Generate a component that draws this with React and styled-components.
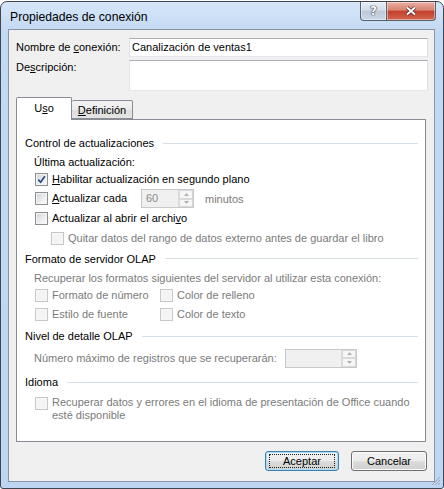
import styled, { createGlobalStyle } from "styled-components";

const GlobalStyle = createGlobalStyle`
  * { box-sizing: border-box; }
  body {
    margin: 0;
    background: #fff;
    font-family: "Liberation Sans", Arial, sans-serif;
    font-size: 11px;
    color: #000;
  }
  u { text-decoration-thickness: 1px; text-underline-offset: 1px; }
`;

const Window = styled.div`
  position: relative;
  margin-top: 1px;
  width: 444px;
  height: 488px;
  border: 1px solid #3f4650;
  border-radius: 7px 7px 3px 3px;
  background: linear-gradient(#d6e6f8, #c2d9f3 30px, #bed6f1);
  padding: 0 8px 6px 7px;
  display: flex;
  flex-direction: column;
`;

const TitleBar = styled.div`
  height: 27px;
  display: flex;
  align-items: center;
  padding-left: 2px;
`;

const Title = styled.div`
  font-size: 12.2px;
  color: #000;
  margin-top: 2px;
`;

const Caption = styled.div`
  display: flex;
  align-self: flex-start;
  margin-left: auto;
  margin-right: -1px;
`;

const CapBtn = styled.div`
  width: ${(p) => p.$w}px;
  height: 19px;
  border: 1px solid #57606d;
  border-top: none;
  display: flex;
  align-items: center;
  justify-content: center;
  border-radius: ${(p) => (p.$close ? "0 0 4px 0" : "0 0 0 4px")};
  box-shadow: inset 0 0 0 1px rgba(255, 255, 255, 0.45);
  background: ${(p) =>
    p.$close
      ? "linear-gradient(#eab0a4, #d9826f 45%, #c3402d 52%, #d3654f)"
      : "linear-gradient(#e6edf5, #d3dde9 45%, #bccadb 52%, #cad7e6)"};
  & + & { border-left: none; }
`;

const HelpGlyph = styled.span`
  font-family: "DejaVu Sans", sans-serif;
  font-weight: bold;
  font-size: 12px;
  color: #fff;
  text-shadow: 0 0 1px #333, 0 0 1px #333, 0 0 1px #333;
`;

const Client = styled.div`
  flex: 1;
  border: 1px solid #8995a5;
  background: #f0f0f0;
  padding: 8px 6px 0 7px;
  display: flex;
  flex-direction: column;
`;

const Field = styled.div`
  display: grid;
  grid-template-columns: 113px 1fr;
  align-items: ${(p) => (p.$top ? "start" : "center")};
  margin-bottom: 3px;
`;

const FieldLabel = styled.label`
  padding-top: ${(p) => (p.$top ? 1 : 0)}px;
  line-height: 13px;
`;

const TextBox = styled.div`
  height: ${(p) => p.$h}px;
  background: #fff;
  border: 1px solid;
  border-color: #abadb3 #dbdfe6 #e3e9ef #e2e3ea;
  padding: 2px 2px 0;
  line-height: 13px;
`;

const Tabs = styled.div`
  display: flex;
  align-items: flex-end;
  margin-top: 3px;
  height: 22px;
  position: relative;
  z-index: 1;
`;

const Tab = styled.div`
  width: ${(p) => p.$w}px;
  height: ${(p) => (p.$active ? 23 : 19)}px;
  margin-bottom: ${(p) => (p.$active ? -1 : 0)}px;
  border: 1px solid #898c95;
  border-bottom: ${(p) => (p.$active ? "none" : "1px solid #898c95")};
  border-left: ${(p) => (p.$first ? "1px solid #898c95" : "none")};
  border-radius: 2px 2px 0 0;
  background: ${(p) => (p.$active ? "#fff" : "linear-gradient(#f3f3f3, #ebebeb 50%, #dedede 51%, #e5e5e5)")};
  display: flex;
  align-items: center;
  justify-content: center;
  padding-bottom: ${(p) => (p.$active ? 2 : 0)}px;
`;

const Panel = styled.div`
  flex: 1;
  margin-right: 2px;
  border: 1px solid #898c95;
  background: #fff;
  padding: 13px 7px 0 8px;
`;

const GroupHead = styled.div`
  display: flex;
  align-items: center;
  height: ${(p) => p.$h}px;
  &::after {
    content: "";
    flex: 1;
    height: 1px;
    background: #d5dfe5;
    margin-left: 9px;
  }
`;

const Row = styled.div`
  display: flex;
  align-items: ${(p) => (p.$top ? "flex-start" : "center")};
  height: ${(p) => p.$h}px;
  padding-left: ${(p) => p.$indent ?? 9}px;
  color: ${(p) => (p.$dim ? "#7b7b7b" : "#000")};
`;

const FixedLabel = styled.span`
  width: ${(p) => p.$w}px;
  flex: none;
`;

const CheckLabel = styled.label`
  display: flex;
  align-items: ${(p) => (p.$top ? "flex-start" : "center")};
  gap: 4px;
  width: ${(p) => (p.$w ? `${p.$w}px` : "auto")};
  flex: none;
  margin-left: 1px;
  color: ${(p) => (p.$disabled ? "#7b7b7b" : "#000")};
  line-height: 13px;
`;

const Box = styled.span`
  width: 13px;
  height: 13px;
  flex: none;
  margin-top: ${(p) => (p.$top ? 1 : 0)}px;
  border: 1px solid ${(p) => (p.$disabled ? "#c8c8c8" : "#8e8f8f")};
  box-shadow: inset 0 0 0 1px ${(p) => (p.$disabled ? "#f7f7f7" : "#f4f4f4")};
  background: ${(p) =>
    p.$disabled ? "#f4f4f4" : "linear-gradient(135deg, #cdd1d6, #eeeff1 60%, #fafafa)"};
  display: flex;
  align-items: center;
  justify-content: center;
`;

const Spin = styled.div`
  display: flex;
  width: ${(p) => p.$w}px;
  height: 19px;
  border: 1px solid #c6c8cc;
  background: #f0f0f0;
  flex: none;
`;

const SpinText = styled.span`
  flex: 1;
  padding-left: 4px;
  line-height: 17px;
  color: #8a8a8a;
`;

const SpinBtns = styled.div`
  width: 15px;
  display: flex;
  flex-direction: column;
  border-left: 1px solid #dcdcdc;
`;

const SpinBtn = styled.div`
  flex: 1;
  background: #f6f6f6;
  border: 1px solid #d9d9d9;
  display: flex;
  align-items: center;
  justify-content: center;
`;

const Units = styled.span`
  margin-left: 11px;
  color: #7b7b7b;
`;

const Pair = styled.div`
  display: grid;
  grid-template-columns: 125px auto;
`;

const Footer = styled.div`
  height: 39px;
  display: flex;
  justify-content: flex-end;
  align-items: flex-start;
  gap: 12px;
  padding: 9px 1px 0 0;
`;

const Button = styled.div`
  position: relative;
  width: ${(p) => p.$w}px;
  height: 20px;
  border: 1px solid ${(p) => (p.$default ? "#3c7fb1" : "#707070")};
  border-radius: 3px;
  background: linear-gradient(#f2f2f2, #ebebeb 50%, #dddddd 51%, #cfcfcf);
  box-shadow: inset 0 0 0 1px ${(p) => (p.$default ? "#a9def6" : "#fbfbfb")};
  display: flex;
  align-items: center;
  justify-content: center;
  ${(p) =>
    p.$default &&
    `&::after {
      content: "";
      position: absolute;
      inset: 2px 3px;
      border: 1px dotted #222;
    }`}
`;

const Grip = styled.svg`
  position: absolute;
  right: 2px;
  bottom: 2px;
`;

const CheckMark = () => (
  <svg width="9" height="9" viewBox="0 0 9 9">
    <path d="M1.3 4.6 L3.6 7.2 L7.9 1.2" fill="none" stroke="#2d4a80" strokeWidth="1.7" />
  </svg>
);

const Check = ({ checked, disabled, w, top, children }) => (
  <CheckLabel $disabled={disabled} $w={w} $top={top}>
    <Box $disabled={disabled} $top={top}>{checked && <CheckMark />}</Box>
    <span>{children}</span>
  </CheckLabel>
);

const Spinner = ({ w, value }) => (
  <Spin $w={w}>
    <SpinText>{value}</SpinText>
    <SpinBtns>
      <SpinBtn>
        <svg width="5" height="3"><path d="M0 3 L2.5 0 L5 3 Z" fill="#b3b3b3" /></svg>
      </SpinBtn>
      <SpinBtn>
        <svg width="5" height="3"><path d="M0 0 L2.5 3 L5 0 Z" fill="#b3b3b3" /></svg>
      </SpinBtn>
    </SpinBtns>
  </Spin>
);

export default function App() {
  return (
    <>
      <GlobalStyle />
      <Window>
        <TitleBar>
          <Title>Propiedades de conexión</Title>
          <Caption>
            <CapBtn $w={27}>
              <HelpGlyph>?</HelpGlyph>
            </CapBtn>
            <CapBtn $w={49} $close>
              <svg width="12" height="10" viewBox="0 0 12 10">
                <path d="M2 1.5 L10 8.5 M10 1.5 L2 8.5" stroke="#4a2a26" strokeWidth="3.6" />
                <path d="M2 1.5 L10 8.5 M10 1.5 L2 8.5" stroke="#fff" strokeWidth="2" />
              </svg>
            </CapBtn>
          </Caption>
        </TitleBar>

        <Client>
          <Field>
            <FieldLabel>
              Nombre de <u>c</u>onexión:
            </FieldLabel>
            <TextBox $h={19}>Canalización de ventas1</TextBox>
          </Field>
          <Field $top>
            <FieldLabel $top>
              De<u>s</u>cripción:
            </FieldLabel>
            <TextBox $h={31} />
          </Field>

          <Tabs>
            <Tab $w={56} $active $first>
              U<u>s</u>o
            </Tab>
            <Tab $w={61}>
              <u>D</u>efinición
            </Tab>
          </Tabs>

          <Panel>
            <GroupHead $h={20}>Control de actualizaciones</GroupHead>
            <Row $h={18}>Última actualización:</Row>
            <Row $h={17}>
              <Check checked>
                <u>H</u>abilitar actualización en segundo plano
              </Check>
            </Row>
            <Row $h={21}>
              <Check w={106}>
                <u>A</u>ctualizar cada
              </Check>
              <Spinner w={53} value="60" />
              <Units>minutos</Units>
            </Row>
            <Row $h={19}>
              <Check>
                Actualizar al abrir el archi<u>v</u>o
              </Check>
            </Row>
            <Row $h={20} $indent={25}>
              <Check disabled>Quitar datos del rango de datos externo antes de guardar el libro</Check>
            </Row>

            <GroupHead $h={21}>Formato de servidor OLAP</GroupHead>
            <Row $h={18} $dim>
              Recuperar los formatos siguientes del servidor al utilizar esta conexión:
            </Row>
            <Row $h={17}>
              <Pair>
                <Check disabled>Formato de número</Check>
                <Check disabled>Color de relleno</Check>
              </Pair>
            </Row>
            <Row $h={20}>
              <Pair>
                <Check disabled>Estilo de fuente</Check>
                <Check disabled>Color de texto</Check>
              </Pair>
            </Row>

            <GroupHead $h={24}>Nivel de detalle OLAP</GroupHead>
            <Row $h={20} $dim>
              <FixedLabel $w={251}>Número máximo de registros que se recuperarán:</FixedLabel>
              <Spinner w={72} value="" />
            </Row>

            <GroupHead $h={28}>Idioma</GroupHead>
            <Row $h={30} $top>
              <Check disabled top>
                Recuperar datos y errores en el idioma de presentación de Office cuando
                <br />
                esté disponible
              </Check>
            </Row>
          </Panel>

          <Footer>
            <Button $w={74} $default>
              Aceptar
            </Button>
            <Button $w={76}>Cancelar</Button>
          </Footer>
        </Client>

        <Grip width="12" height="12" viewBox="0 0 12 12">
          <path d="M11 3 L3 11 M11 6 L6 11 M11 9 L9 11" stroke="#9aa6b4" strokeWidth="1" />
        </Grip>
      </Window>
    </>
  );
}
